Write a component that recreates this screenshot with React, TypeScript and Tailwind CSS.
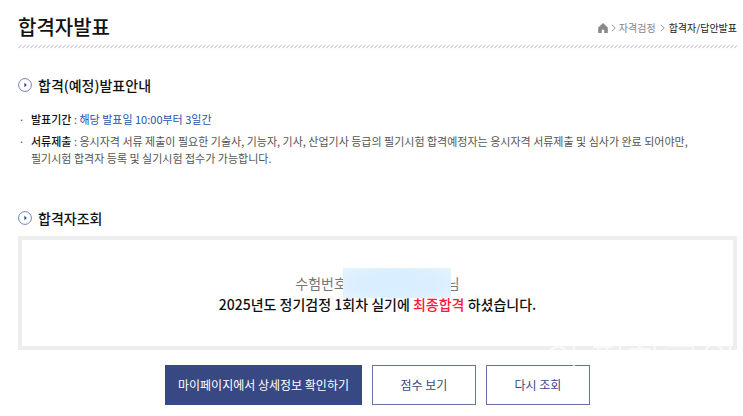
import type { ReactNode } from "react";

function SectionTitle({ children }: { children: ReactNode }) {
  return (
    <h2 className="flex items-center gap-1.5 text-[14px] leading-5 font-medium text-[#111]">
      <svg viewBox="0 0 14 14" className="size-3.5" aria-hidden="true">
        <circle cx="7" cy="7" r="6.4" fill="none" stroke="#7184b8" strokeWidth="1" />
        <path d="M6.4 4.7 8.8 7 6.4 9.3Z" fill="#2d4484" />
      </svg>
      {children}
    </h2>
  );
}

function Chevron() {
  return (
    <svg viewBox="0 0 5 8" className="h-2 w-[5px]" fill="none" stroke="#999" aria-hidden="true">
      <path d="M.8.8 4.2 4 .8 7.2" />
    </svg>
  );
}

export default function App() {
  return (
    <main className="overflow-hidden bg-white pt-[13px] pr-[6px] pb-[11px] pl-[18px] font-['Noto_Sans_CJK_KR',sans-serif]">
      <header className="flex items-center justify-between">
        <h1 className="text-[20px] leading-7 font-medium text-[#111]">합격자발표</h1>
        <nav aria-label="breadcrumb" className="flex items-center gap-[3px] pt-0.5 text-[10px] leading-4">
          <a href="#home" aria-label="홈">
            <svg viewBox="0 0 10 10" className="size-2.5" fill="#8a8a8a" aria-hidden="true">
              <path d="M5 0 .2 4.4V10h3.6V6.8h2.4V10h3.6V4.4Z" />
            </svg>
          </a>
          <Chevron />
          <a href="#exam" className="text-[#888]">자격검정</a>
          <span className="px-px"><Chevron /></span>
          <span className="text-[#222]">합격자/답안발표</span>
        </nav>
      </header>
      <svg className="mt-[3px] h-[5px] w-full" aria-hidden="true">
        <defs>
          <pattern id="hatch" width="4" height="5" patternUnits="userSpaceOnUse">
            <path d="M0 4.5 4 .5" stroke="#b4b7c1" strokeWidth="1" />
          </pattern>
        </defs>
        <rect width="100%" height="5" fill="url(#hatch)" />
      </svg>

      <section className="pt-[26px]">
        <SectionTitle>합격(예정)발표안내</SectionTitle>
        <ul className="mt-4 flex flex-col gap-[5px] text-[11px] leading-[17px] text-[#555]">
          <li className="flex gap-1.5">
            <span className="w-[7px] text-center">·</span>
            <p>
              <strong className="font-medium text-[#111]">발표기간</strong> :{" "}
              <span className="text-[#2a50b0]">해당 발표일 10:00부터 3일간</span>
            </p>
          </li>
          <li className="flex gap-1.5">
            <span className="w-[7px] text-center">·</span>
            <p>
              <strong className="font-medium text-[#111]">서류제출</strong> : 응시자격 서류 제출이 필요한 기술사, 기능자, 기사, 산업기사 등급의 필기시험 합격예정자는 응시자격 서류제출 및 심사가 완료 되어야만,
              <br />
              필기시험 합격자 등록 및 실기시험 접수가 가능합니다.
            </p>
          </li>
        </ul>
      </section>

      <section className="relative pt-[41px]">
        <SectionTitle>합격자조회</SectionTitle>
        <div className="mt-2 border-4 border-[#eee] pt-[33px] pb-[31px] text-center text-[14px] leading-[21px]">
          <p className="flex justify-center text-[#777]">
            수험번호
            <span className="relative w-[100px]">
              <span className="absolute -inset-x-1 -top-[5px] h-[30px] bg-radial from-[#d9eeff] from-50% to-[#e6f4ff]" />
            </span>
            님
          </p>
          <p className="relative font-medium text-[#111]">
            2025년도 정기검정 1회차 실기에 <em className="text-[#ff1638] not-italic">최종합격</em> 하셨습니다.
          </p>
        </div>
        <div className="mt-[15px] flex justify-center gap-2.5 text-[12px]">
          <button type="button" className="h-10 w-[197px] bg-[#384882] text-white">마이페이지에서 상세정보 확인하기</button>
          <button type="button" className="h-10 w-[104px] border border-[#6472a8] text-[#384882]">점수 보기</button>
          <button type="button" className="h-10 w-[104px] border border-[#6472a8] text-[#384882]">다시 조회</button>
        </div>
        <span className="pointer-events-none absolute right-0 bottom-[30px] text-[40px] leading-8 font-light text-white/70 select-none" aria-hidden="true">
          의 평화공원
        </span>
      </section>
    </main>
  );
}
